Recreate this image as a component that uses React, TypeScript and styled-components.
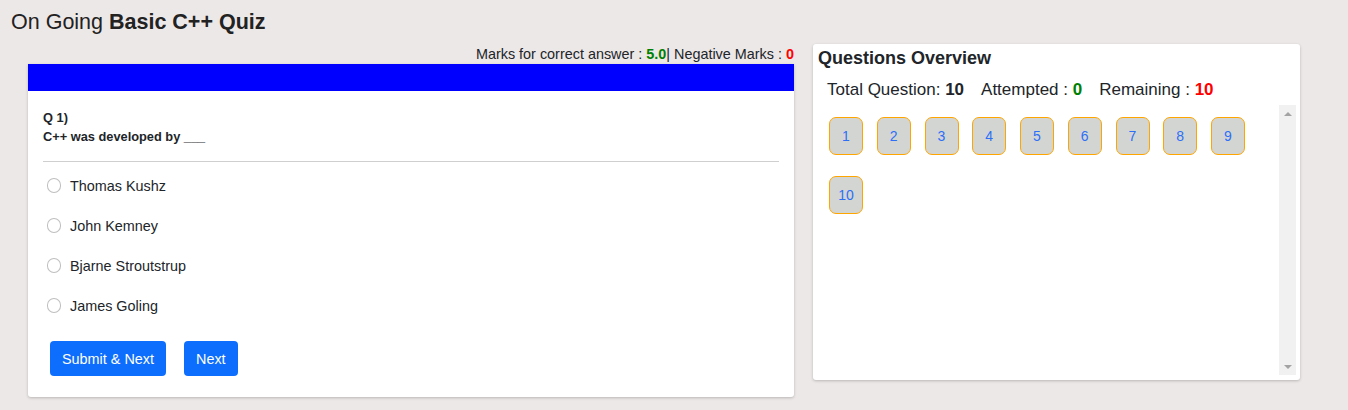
import React from "react";
import styled, { createGlobalStyle } from "styled-components";

const GlobalStyle = createGlobalStyle`
  html, body {
    margin: 0;
    padding: 0;
    background: #ede8e8;
    font-family: "Liberation Sans", Arial, sans-serif;
    color: #212529;
  }
  * { box-sizing: border-box; }
`;

const Page = styled.div`
  width: 1348px;
  height: 410px;
  overflow: hidden;
`;

const Title = styled.h1`
  margin: 0;
  padding: 10px 11px 0;
  font-size: 21.5px;
  line-height: 25px;
  font-weight: 400;
  color: #222;
  b { font-weight: 700; }
`;

const Row = styled.div`
  display: flex;
  align-items: flex-start;
  margin-top: 9px;
  padding-left: 28px;
  gap: 19px;
`;

const LeftColumn = styled.div`
  width: 766px;
  display: flex;
  flex-direction: column;
`;

const MarksLine = styled.div`
  text-align: right;
  font-size: 14.4px;
  line-height: 20px;
`;

const Strong = styled.b<{ $color: string }>`
  color: ${(p) => p.$color};
  font-weight: 700;
`;

const QuizCard = styled.div`
  background: #fff;
  box-shadow: 0 1px 3px rgba(0, 0, 0, 0.22);
  border-radius: 0 0 3px 3px;
`;

const Bar = styled.div`
  height: 27px;
  background: #0000ff;
`;

const CardBody = styled.div`
  padding: 17px 15px 21px 15px;
`;

const QTitle = styled.div`
  font-size: 12.8px;
  font-weight: 700;
  line-height: 19px;
`;

const Divider = styled.hr`
  margin: 15px 0 0;
  border: 0;
  border-top: 1px solid #cfcfcf;
  height: 0;
`;

const OptionList = styled.div`
  margin-top: 3px;
  display: flex;
  flex-direction: column;
`;

const OptionRow = styled.label`
  height: 40px;
  display: flex;
  align-items: center;
  gap: 8.6px;
  padding-left: 4px;
  padding-top: 1px;
  font-size: 14.4px;
`;

const Radio = styled.input`
  appearance: none;
  margin: 0;
  width: 14.4px;
  height: 14.4px;
  border-radius: 50%;
  border: 1px solid rgba(0, 0, 0, 0.25);
  background: #fff;
  flex: none;
`;

const Actions = styled.div`
  display: flex;
  gap: 18px;
  margin-top: 16px;
  padding-left: 7px;
`;

const PrimaryButton = styled.button`
  height: 35px;
  padding: 0 12px;
  border: 0;
  border-radius: 4px;
  background: #0d6efd;
  color: #fff;
  font-family: "Liberation Sans", Arial, sans-serif;
  font-size: 14.4px;
`;

const OverviewCard = styled.div`
  width: 487px;
  background: #fff;
  box-shadow: 0 1px 3px rgba(0, 0, 0, 0.22);
  border-radius: 3px;
  padding: 3px 4px 5px 5px;
`;

const OverviewTitle = styled.div`
  font-size: 18px;
  font-weight: 700;
  line-height: 22px;
`;

const Stats = styled.div`
  display: flex;
  gap: 17px;
  margin-top: 11px;
  padding-left: 9px;
  font-size: 17px;
  line-height: 20px;
`;

const ScrollArea = styled.div`
  margin-top: 5px;
  height: 270px;
  display: flex;
`;

const Grid = styled.div`
  flex: 1;
  display: flex;
  flex-wrap: wrap;
  align-content: flex-start;
  column-gap: 13.75px;
  row-gap: 21px;
  padding: 12px 0 0 11px;
`;

const QButton = styled.button`
  width: 34px;
  height: 38px;
  border: 1px solid #ffa500;
  border-radius: 7px;
  background: #d3d5d3;
  color: #2d6ff7;
  font-family: "Liberation Sans", Arial, sans-serif;
  font-size: 14px;
  padding: 0;
`;

const ScrollTrack = styled.div`
  width: 17px;
  background: #f1f1f1;
  display: flex;
  flex-direction: column;
  justify-content: space-between;
  align-items: center;
  padding: 7px 0 6px;
`;

const Arrow = styled.div<{ $down?: boolean }>`
  width: 0;
  height: 0;
  border-left: 4px solid transparent;
  border-right: 4px solid transparent;
  ${(p) =>
    p.$down
      ? "border-top: 4px solid #a3a3a3;"
      : "border-bottom: 4px solid #a3a3a3;"}
`;

const options = ["Thomas Kushz", "John Kemney", "Bjarne Stroutstrup", "James Goling"];

export default function App() {
  return (
    <Page>
      <GlobalStyle />
      <Title>
        On Going <b>Basic C++ Quiz</b>
      </Title>
      <Row>
        <LeftColumn>
          <MarksLine>
            Marks for correct answer : <Strong $color="#008000">5.0</Strong>| Negative Marks :{" "}
            <Strong $color="#ff0000">0</Strong>
          </MarksLine>
          <QuizCard>
            <Bar />
            <CardBody>
              <QTitle>Q 1)</QTitle>
              <QTitle>C++ was developed by ___</QTitle>
              <Divider />
              <OptionList>
                {options.map((o) => (
                  <OptionRow key={o}>
                    <Radio type="radio" name="q1" />
                    {o}
                  </OptionRow>
                ))}
              </OptionList>
              <Actions>
                <PrimaryButton>Submit &amp; Next</PrimaryButton>
                <PrimaryButton>Next</PrimaryButton>
              </Actions>
            </CardBody>
          </QuizCard>
        </LeftColumn>
        <OverviewCard>
          <OverviewTitle>Questions Overview</OverviewTitle>
          <Stats>
            <span>
              Total Question: <Strong $color="#212529">10</Strong>
            </span>
            <span>
              Attempted : <Strong $color="#008000">0</Strong>
            </span>
            <span>
              Remaining : <Strong $color="#ff0000">10</Strong>
            </span>
          </Stats>
          <ScrollArea>
            <Grid>
              {Array.from({ length: 10 }, (_, i) => (
                <QButton key={i}>{i + 1}</QButton>
              ))}
            </Grid>
            <ScrollTrack>
              <Arrow />
              <Arrow $down />
            </ScrollTrack>
          </ScrollArea>
        </OverviewCard>
      </Row>
    </Page>
  );
}
